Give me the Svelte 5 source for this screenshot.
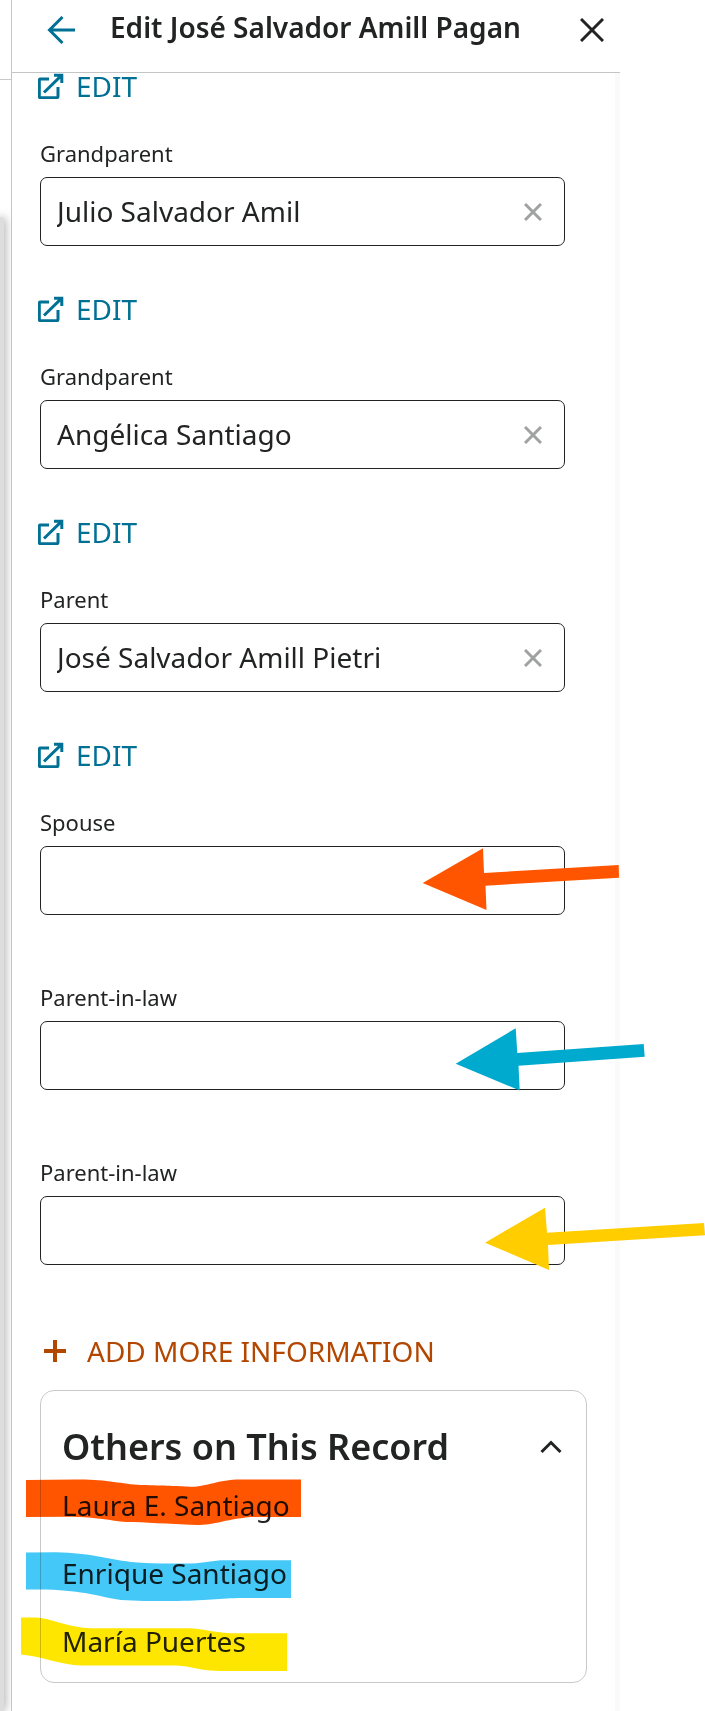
<script lang="ts">
  const fields = $state([
    { id: 'grandparent-1', label: 'Grandparent', value: 'Julio Salvador Amil', arrow: '' },
    { id: 'grandparent-2', label: 'Grandparent', value: 'Angélica Santiago', arrow: '' },
    { id: 'parent', label: 'Parent', value: 'José Salvador Amill Pietri', arrow: '' },
    { id: 'spouse', label: 'Spouse', value: '', arrow: 'orange' },
    { id: 'in-law-1', label: 'Parent-in-law', value: '', arrow: 'blue' },
    { id: 'in-law-2', label: 'Parent-in-law', value: '', arrow: 'yellow' },
  ]);

  // Hand-drawn markers, one colour per person
  const arrows: Record<string, { width: number; points: string }> = {
    orange: { width: 198, points: '0.7,35 61,0.3 62,25 196.7,17 197,29.7 63.5,37.7 64.5,62' },
    blue: { width: 190, points: '0.7,35.7 60.7,0.3 62.3,25 188.7,16 189.7,28.7 63.5,37.7 64.7,62.5' },
    yellow: { width: 220, points: '0,35.7 60,0.7 62,25.7 219,16 220,28.3 63,38 64,63' },
  };

  const others = [
    {
      name: 'Laura E. Santiago',
      color: 'orange',
      path: 'M0 1L50 .5C80 0 95 5 115 6C140 6.5 150 7 164 7.7C182 8 190 .7 215 .5H275V38H225C195 41 190 46 170 46C140 45 120 43 100 43C85 41.5 70 38 45 37.7L0 38Z',
    },
    {
      name: 'Enrique Santiago',
      color: 'blue',
      path: 'M0 .5L30 .3C65 1 80 7 105 10C125 12 145 11.5 165 11.5C180 11 185 8.3 200 8.3H265V46H215C195 46 180 49 145 49C125 49 110 49 95 48C70 44 60 39 20 37.5H0Z',
    },
    {
      name: 'María Puertes',
      color: 'yellow',
      path: 'M0 .5H15C28 1 50 11 70 11.3H165C185 11.5 190 16 215 16.3H266V54H200C180 54 170 49 155 48.5H60C40 48 20 39 0 37.5Z',
    },
  ];

  let open = $state(true);
</script>

{#snippet editLink()}
  <a class="edit-link" href="#edit">
    <svg width="26" height="26" viewBox="0 0 26 26" aria-hidden="true">
      <path d="M11 6H2.5Q1.3 6 1.3 7.2V23.5Q1.3 24.7 2.5 24.7H18.8Q20 24.7 20 23.5V14" />
      <path d="M16 2.2H23.8V10M23.8 2.2L6 19.5" />
    </svg>
    EDIT
  </a>
{/snippet}

<div class="page">
  <div class="backdrop">
    <div class="backdrop-bar"></div>
    <div class="backdrop-card"></div>
  </div>

  <main class="panel">
    <header class="panel-header">
      <button type="button" class="icon-btn back" aria-label="Back">
        <svg width="28" height="28" viewBox="0 0 28 28" aria-hidden="true">
          <path d="M28 14H3M15.5 1L2.5 14L15.5 27" />
        </svg>
      </button>
      <h1>Edit José Salvador Amill Pagan</h1>
      <button type="button" class="icon-btn" aria-label="Close">
        <svg width="24" height="24" viewBox="0 0 24 24" aria-hidden="true">
          <path d="M1 1L23 23M23 1L1 23" />
        </svg>
      </button>
    </header>

    <div class="panel-body">
      {@render editLink()}

      {#each fields as field (field.id)}
        <div class="field" class:linked={field.value !== ''}>
          <label for={field.id}>{field.label}</label>
          <div class="input-wrap">
            <input id={field.id} type="text" bind:value={field.value} />
            {#if field.value}
              <button type="button" class="clear" aria-label="Clear {field.label}" onclick={() => (field.value = '')}>
                <svg width="18" height="18" viewBox="0 0 18 18" aria-hidden="true">
                  <path d="M1 1L17 17M17 1L1 17" />
                </svg>
              </button>
            {/if}
            {#if field.arrow}
              <svg class="arrow {field.arrow}" width={arrows[field.arrow].width} height="63" aria-hidden="true">
                <polygon points={arrows[field.arrow].points} />
              </svg>
            {/if}
          </div>
        </div>
        {#if field.value}
          {@render editLink()}
        {/if}
      {/each}

      <button type="button" class="add-more">
        <svg width="22" height="22" viewBox="0 0 22 22" aria-hidden="true">
          <path d="M11 0V22M0 11H22" />
        </svg>
        ADD MORE INFORMATION
      </button>

      <section class="others">
        <div class="others-header">
          <h2>Others on This Record</h2>
          <button type="button" class="toggle" aria-label="Toggle list" aria-expanded={open} onclick={() => (open = !open)}>
            <svg width="22" height="14" viewBox="0 0 22 14" aria-hidden="true">
              <path d="M1.5 12L11 2.5L20.5 12" />
            </svg>
          </button>
        </div>
        {#if open}
          <ul>
            {#each others as person}
              <li>
                {person.name}
                <svg class="highlight {person.color}" width="275" height="54" aria-hidden="true">
                  <path d={person.path} />
                </svg>
              </li>
            {/each}
          </ul>
        {/if}
      </section>
    </div>
  </main>
</div>

<style>
  :global(body) {
    margin: 0;
    background: #fff;
  }
  .page {
    display: flex;
    min-height: 100vh;
    padding-right: 85px;
    box-sizing: border-box;
    font-family: 'Noto Sans', sans-serif;
    font-size: 28px;
    color: #222423;
  }
  svg {
    display: block;
    flex-shrink: 0;
    fill: none;
    stroke: currentColor;
  }
  button {
    padding: 0;
    border: 0;
    background: none;
    font: inherit;
    color: inherit;
    cursor: pointer;
  }

  .backdrop {
    display: flex;
    flex-direction: column;
    width: 11px;
    flex-shrink: 0;
    overflow: hidden;
  }
  .backdrop-bar {
    height: 79px;
    margin-bottom: 137px;
    border-bottom: 1px solid #c8caca;
  }
  .backdrop-card {
    flex: 1;
    width: 4px;
    border-radius: 0 6px 0 0;
    background: #dbdedd;
    box-shadow: 0 0 10px rgba(0, 0, 0, 0.6);
  }

  .panel {
    flex: 1;
    min-width: 0;
    border-left: 1px solid #c4c6c6;
  }
  .panel-header {
    display: flex;
    align-items: center;
    padding: 8px 6px 20px 27px;
    border-bottom: 1px solid #c4c6c6;
  }
  .icon-btn {
    display: flex;
    align-items: center;
    justify-content: center;
    width: 44px;
    height: 44px;
    flex-shrink: 0;
    stroke-width: 3px;
  }
  .back {
    color: #007195;
  }
  h1 {
    flex: 1;
    margin: 0 0 0 27px;
    padding-bottom: 6px;
    font-size: 28px;
    font-weight: 600;
    line-height: 36px;
  }

  .panel-body {
    padding: 0 28px 28px;
    border-right: 5px solid #fafafa;
  }
  .edit-link {
    display: flex;
    align-items: center;
    gap: 12px;
    width: max-content;
    margin-left: -2px;
    line-height: 26px;
    color: #007195;
    text-decoration: none;
    stroke-width: 3px;
  }
  .field {
    margin: 39px 22px 67px 0;
  }
  .field.linked {
    margin-bottom: 50px;
  }
  .field:not(.linked) + .field {
    margin-top: 0;
  }
  label {
    display: block;
    margin-bottom: 9px;
    font-size: 22px;
    line-height: 30px;
  }
  .input-wrap {
    position: relative;
    display: flex;
  }
  input {
    width: 100%;
    height: 69px;
    box-sizing: border-box;
    padding: 0 60px 2px 16px;
    border: 1px solid #222423;
    border-radius: 7px;
    background: #fff;
    font: inherit;
    color: inherit;
  }
  .clear {
    position: absolute;
    top: 15px;
    right: 12px;
    display: flex;
    align-items: center;
    justify-content: center;
    width: 40px;
    height: 40px;
    color: #a0a2a1;
    stroke-width: 3px;
  }
  .arrow {
    position: absolute;
    stroke: none;
  }
  .arrow.orange {
    top: 2px;
    right: -55px;
    fill: #ff5500;
  }
  .arrow.blue {
    top: 7px;
    right: -80px;
    fill: #00a9ce;
  }
  .arrow.yellow {
    top: 11px;
    right: -140px;
    fill: #ffcd00;
  }

  .add-more {
    display: flex;
    align-items: center;
    gap: 21px;
    margin: -1px 0 0 4px;
    line-height: 40px;
    color: #b34700;
    stroke-width: 4px;
  }
  .others {
    margin-top: 19px;
    padding: 32px 24px 7px 21px;
    border: 1px solid #c8caca;
    border-radius: 14px;
  }
  .others-header {
    display: flex;
    align-items: center;
    justify-content: space-between;
  }
  h2 {
    margin: 0;
    font-size: 36px;
    font-weight: 600;
    line-height: 48px;
  }
  .toggle {
    stroke-width: 3px;
  }
  ul {
    margin: 0;
    padding: 0;
    list-style: none;
  }
  li {
    position: relative;
    line-height: 68px;
  }
  .highlight {
    position: absolute;
    stroke: none;
    mix-blend-mode: multiply;
    pointer-events: none;
  }
  .highlight.orange {
    top: 8px;
    left: -36px;
    fill: #ff5500;
  }
  .highlight.blue {
    top: 13px;
    left: -36px;
    fill: #44c8f7;
  }
  .highlight.yellow {
    top: 10px;
    left: -41px;
    fill: #ffe600;
  }
</style>
